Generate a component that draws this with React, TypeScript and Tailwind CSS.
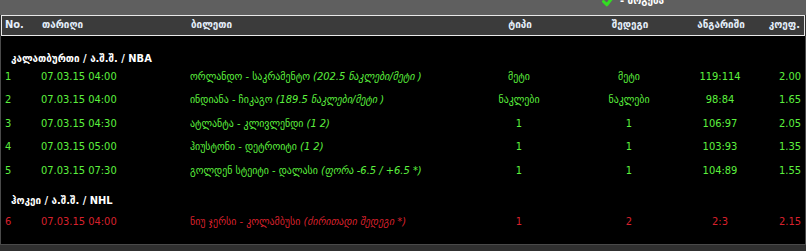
import React from "react";

type Row = {
  no: number;
  date: string;
  match: string;
  note: string;
  type: string;
  result: string;
  score: string;
  coef: string;
  lost?: boolean;
};

const GROUPS: { title: string; rows: Row[] }[] = [
  {
    title: "კალათბურთი / ა.შ.შ. / NBA",
    rows: [
      { no: 1, date: "07.03.15 04:00", match: "ორლანდო - საკრამენტო", note: "(202.5 ნაკლები/მეტი )", type: "მეტი", result: "მეტი", score: "119:114", coef: "2.00" },
      { no: 2, date: "07.03.15 04:00", match: "ინდიანა - ჩიკაგო", note: "(189.5 ნაკლები/მეტი )", type: "ნაკლები", result: "ნაკლები", score: "98:84", coef: "1.65" },
      { no: 3, date: "07.03.15 04:30", match: "ატლანტა - კლივლენდი", note: "(1 2)", type: "1", result: "1", score: "106:97", coef: "2.05" },
      { no: 4, date: "07.03.15 05:00", match: "ჰიუსტონი - დეტროიტი", note: "(1 2)", type: "1", result: "1", score: "103:93", coef: "1.35" },
      { no: 5, date: "07.03.15 07:30", match: "გოლდენ სტეიტი - დალასი", note: "(ფორა -6.5 / +6.5 *)", type: "1", result: "1", score: "104:89", coef: "1.55" }
    ]
  },
  {
    title: "ჰოკეი / ა.შ.შ. / NHL",
    rows: [
      { no: 6, date: "07.03.15 04:00", match: "ნიუ ჯერსი - კოლამბუსი", note: "(ძირითადი შედეგი *)", type: "1", result: "2", score: "2:3", coef: "2.15", lost: true }
    ]
  }
];

const COLS = "grid grid-cols-[40px_149px_274px_110px_110px_72px_1fr]";

export default function App() {
  return (
    <div
      className="w-[806px] h-[251px] overflow-hidden bg-[#303030] text-[11px]"
      style={{ fontFamily: '"Liberation Sans Narrow", "DejaVu Sans Condensed", "Liberation Sans", "DejaVu Sans", sans-serif' }}
    >
      {/* top strip, legend only partly visible */}
      <div className="h-[15px] bg-[#5f5f5f] flex items-end overflow-hidden">
        <div className="ml-[602px] flex items-end gap-[6px] translate-y-[-8px]">
          <svg width="12" height="12" viewBox="0 0 12 12">
            <path d="M1.5 6.5 L4.8 9.8 L10.5 2.5" fill="none" stroke="#33dd22" strokeWidth="3" strokeLinecap="round" strokeLinejoin="round" />
          </svg>
          <span className="text-white leading-[12px] font-bold">- მოგება</span>
        </div>
      </div>

      {/* header */}
      <div className={`${COLS} mx-[1px] h-[21px] items-center border border-[#e8e8e8] bg-[#3b3b3b] font-bold text-[#e4eefa]`}>
        <span className="pl-[3px]">No.</span>
        <span>თარიღი</span>
        <span>ბილეთი</span>
        <span className="text-center">ტიპი</span>
        <span className="text-center">შედეგი</span>
        <span className="text-center">ანგარიში</span>
        <span className="text-right pr-[4px]">კოეფ.</span>
      </div>

      {/* body */}
      <div className="h-[209px] bg-black border-l border-r border-b border-[#4a4a4a]">
        {GROUPS.map((g, gi) => (
          <div key={g.title}>
            <div
              className={
                gi === 0
                  ? "h-[29px] pt-[17px] pl-[10px] leading-[12px] font-bold text-white"
                  : "h-[28px] pt-[12px] pl-[10px] leading-[12px] font-bold text-white"
              }
            >
              {g.title}
            </div>
            {g.rows.map((r) => (
              <div
                key={r.no}
                className={`${COLS} h-[23.5px] items-center ${r.lost ? "text-[#d8202c]" : "text-[#5cf03e]"}`}
              >
                <span className="pl-[4px]">{r.no}</span>
                <span>{r.date}</span>
                <span className="whitespace-nowrap">
                  {r.match} <i>{r.note}</i>
                </span>
                <span className="text-center">{r.type}</span>
                <span className="text-center">{r.result}</span>
                <span className="text-center">{r.score}</span>
                <span className="text-right pr-[4px]">{r.coef}</span>
              </div>
            ))}
          </div>
        ))}
      </div>
    </div>
  );
}
